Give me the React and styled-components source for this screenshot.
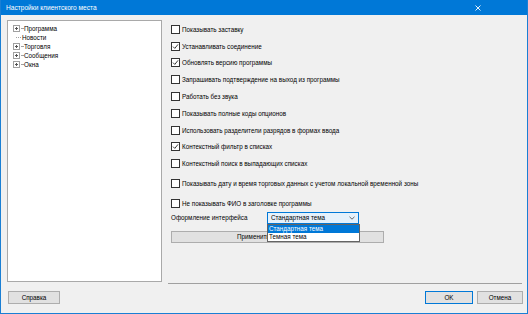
import React from "react";
import styled, { createGlobalStyle } from "styled-components";

const GlobalStyle = createGlobalStyle`
  html, body {
    margin: 0;
    padding: 0;
    background: #ffffff;
  }
  body {
    font-family: "Liberation Sans", Arial, sans-serif;
    font-size: 6.3px;
    color: #000;
  }
`;

const Window = styled.div`
  position: relative;
  width: 528px;
  height: 314px;
  box-sizing: border-box;
  background: #f0f0f0;
  border: 1px solid #1a7fd4;
  border-top: none;
  display: flex;
  flex-direction: column;
`;

const TitleBar = styled.div`
  height: 15px;
  background: #0078d7;
  color: #fff;
  display: flex;
  align-items: center;
  justify-content: space-between;
  padding: 0 46px 0 5px;
  font-size: 6.6px;
`;

const CloseIcon = styled.svg`
  width: 6px;
  height: 6px;
`;

const Body = styled.div`
  display: flex;
  padding: 5px 6px 0 6px;
  flex: 1;
`;

const Tree = styled.div`
  width: 155px;
  height: 262px;
  box-sizing: border-box;
  background: #fff;
  border: 1px solid #a9a9a9;
  padding: 3px 0 0 5px;
`;

const TreeRow = styled.div`
  height: 9px;
  display: flex;
  align-items: center;
  gap: 1px;
`;

const Expander = styled.span`
  width: 5px;
  height: 5px;
  border: 1px solid #a0a0a0;
  box-sizing: content-box;
  position: relative;
  background: #fff;
  &::before {
    content: "";
    position: absolute;
    left: 1px;
    top: 2px;
    width: 3px;
    height: 1px;
    background: #555;
  }
  &::after {
    content: "";
    position: absolute;
    left: 2px;
    top: 1px;
    width: 1px;
    height: 3px;
    background: #555;
  }
`;

const Connector = styled.span`
  width: ${(p) => (p.$short ? 2 : 5)}px;
  border-top: 1px dotted #a0a0a0;
  margin-left: ${(p) => (p.$indent ? 3 : 0)}px;
  align-self: center;
`;

const Right = styled.div`
  flex: 1;
  display: flex;
  flex-direction: column;
  padding: 1px 0 0 9px;
  position: relative;
`;

const Row = styled.label`
  height: 16.8px;
  display: flex;
  align-items: center;
  gap: 2px;
  margin-top: ${(p) => p.$extra || 0}px;
`;

const Box = styled.span`
  width: 7px;
  height: 7px;
  border: 1px solid #333;
  background: #fff;
  display: flex;
  align-items: center;
  justify-content: center;
`;

const ThemeRow = styled.div`
  display: flex;
  align-items: center;
  height: 12px;
  position: relative;
`;

const ThemeLabel = styled.span`
  width: 96px;
`;

const Select = styled.div`
  width: 92px;
  height: 12px;
  box-sizing: border-box;
  border: 1px solid #0078d7;
  background: #e5f1fb;
  display: flex;
  align-items: center;
  justify-content: space-between;
  padding: 0 3px 0 3px;
`;

const Dropdown = styled.div`
  position: absolute;
  left: 96px;
  top: 12px;
  width: 93px;
  box-sizing: border-box;
  border: 1px solid #646464;
  background: #fff;
  z-index: 2;
`;

const Option = styled.div`
  height: 8px;
  line-height: 8px;
  padding-left: 1px;
  background: ${(p) => (p.$active ? "#0078d7" : "#fff")};
  color: ${(p) => (p.$active ? "#fff" : "#000")};
`;

const ApplyButton = styled.div`
  margin-top: 7px;
  width: 213px;
  height: 12px;
  box-sizing: border-box;
  border: 1px solid #adadad;
  background: #e1e1e1;
  display: flex;
  align-items: center;
  justify-content: center;
`;

const Separator = styled.div`
  margin-top: auto;
  height: 1px;
  background: #a0a0a0;
  margin: auto -1px 0 -3px;
`;

const Footer = styled.div`
  display: flex;
  align-items: center;
  justify-content: space-between;
  padding: 7px 4px 9px 7px;
`;

const Buttons = styled.div`
  display: flex;
  gap: 4px;
`;

const Button = styled.div`
  width: ${(p) => p.$w || 48}px;
  height: 13px;
  box-sizing: border-box;
  border: 1px solid ${(p) => (p.$default ? "#0078d7" : "#adadad")};
  background: #e1e1e1;
  display: flex;
  align-items: center;
  justify-content: center;
`;

const Check = () => (
  <svg width="7" height="7" viewBox="0 0 7 7">
    <path d="M1 3.6 L2.8 5.4 L6 1.4" fill="none" stroke="#222" strokeWidth="0.9" />
  </svg>
);

const options = [
  { text: "Показывать заставку" },
  { text: "Устанавливать соединение", checked: true },
  { text: "Обновлять версию программы", checked: true },
  { text: "Запрашивать подтверждение на выход из программы" },
  { text: "Работать без звука" },
  { text: "Показывать полные коды опционов" },
  { text: "Использовать разделители разрядов в формах ввода" },
  { text: "Контекстный фильтр в списках", checked: true },
  { text: "Контекстный поиск в выпадающих списках" },
  { text: "Показывать дату и время торговых данных с учетом локальной временной зоны", extra: 3 },
  { text: "Не показывать ФИО в заголовке программы", extra: 3 },
];

const tree = [
  { text: "Программа", folder: true },
  { text: "Новости" },
  { text: "Торговля", folder: true },
  { text: "Сообщения", folder: true },
  { text: "Окна", folder: true },
];

export default function App() {
  return (
    <>
      <GlobalStyle />
      <Window>
        <TitleBar>
          <span>Настройки клиентского места</span>
          <CloseIcon viewBox="0 0 6 6">
            <path d="M0.5 0.5 L5.5 5.5 M5.5 0.5 L0.5 5.5" stroke="#fff" strokeWidth="0.9" />
          </CloseIcon>
        </TitleBar>
        <Body>
          <Tree>
            {tree.map((t) => (
              <TreeRow key={t.text}>
                {t.folder ? (
                  <>
                    <Expander />
                    <Connector $short />
                  </>
                ) : (
                  <Connector $indent />
                )}
                <span>{t.text}</span>
              </TreeRow>
            ))}
          </Tree>
          <Right>
            {options.map((o) => (
              <Row key={o.text} $extra={o.extra}>
                <Box>{o.checked && <Check />}</Box>
                <span>{o.text}</span>
              </Row>
            ))}
            <ThemeRow>
              <ThemeLabel>Оформление интерфейса</ThemeLabel>
              <Select>
                <span>Стандартная тема</span>
                <svg width="6" height="4" viewBox="0 0 6 4">
                  <path d="M0.5 0.8 L3 3.2 L5.5 0.8" fill="none" stroke="#444" strokeWidth="0.8" />
                </svg>
              </Select>
              <Dropdown>
                <Option $active>Стандартная тема</Option>
                <Option>Темная тема</Option>
              </Dropdown>
            </ThemeRow>
            <ApplyButton>Применить цветовую схему</ApplyButton>
            <Separator />
          </Right>
        </Body>
        <Footer>
          <Button $w={52}>Справка</Button>
          <Buttons>
            <Button $default>OK</Button>
            <Button $w={46}>Отмена</Button>
          </Buttons>
        </Footer>
      </Window>
    </>
  );
}
